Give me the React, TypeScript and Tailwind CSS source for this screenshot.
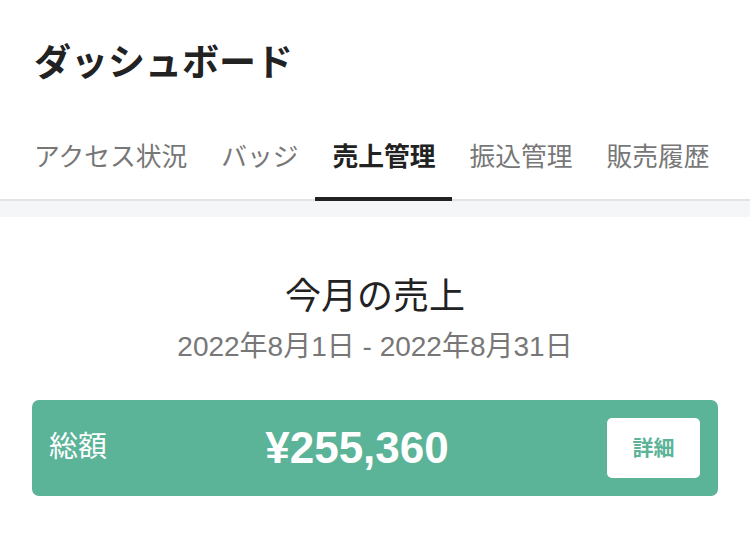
import React from "react";

const TABS = ["アクセス状況", "バッジ", "売上管理", "振込管理", "販売履歴"];
const ACTIVE = "売上管理";

const FONT = "font-['Liberation_Sans','Noto_Sans_CJK_JP',sans-serif]";

export default function App() {
  return (
    <div className={`w-[750px] h-[538px] bg-white overflow-hidden ${FONT}`}>
      {/* Header */}
      <div className="px-[34px] pt-[38px]">
        <h1 className="text-[37px] leading-[52px] font-bold text-[#222]">
          ダッシュボード
        </h1>
      </div>

      {/* Tabs */}
      <div className="mt-[48px] flex px-[17px] border-b-2 border-[#e3e3e3]">
        {TABS.map((tab) => {
          const active = tab === ACTIVE;
          return (
            <div
              key={tab}
              className={`px-[17px] pb-[21px] border-b-4 -mb-[2px] text-[25.75px] leading-[38px] whitespace-nowrap ${
                active
                  ? "border-[#222] text-[#222] font-bold"
                  : "border-transparent text-[#777]"
              }`}
            >
              {tab}
            </div>
          );
        })}
      </div>
      <div className="h-[16px] bg-[#f5f6f7]" />

      {/* This month */}
      <div className="pt-[57px] flex flex-col items-center">
        <div className="text-[36px] leading-[46px] text-[#222]">今月の売上</div>
        <div className="mt-[8px] text-[28px] leading-[38px] text-[#777]">
          2022年8月1日 - 2022年8月31日
        </div>
      </div>

      <div className="mt-[34px] mx-[32px] h-[96px] rounded-[7px] bg-[#5bb398] flex items-center pl-[17px] pr-[18px]">
        <div className="text-[29px] text-white">総額</div>
        <div className="flex-1 text-center text-[44px] font-bold text-white">
          ¥255,360
        </div>
        <button className="w-[93px] h-[60px] rounded-[5px] bg-white text-[#5bb398] text-[21px] font-bold">
          詳細
        </button>
      </div>
    </div>
  );
}
